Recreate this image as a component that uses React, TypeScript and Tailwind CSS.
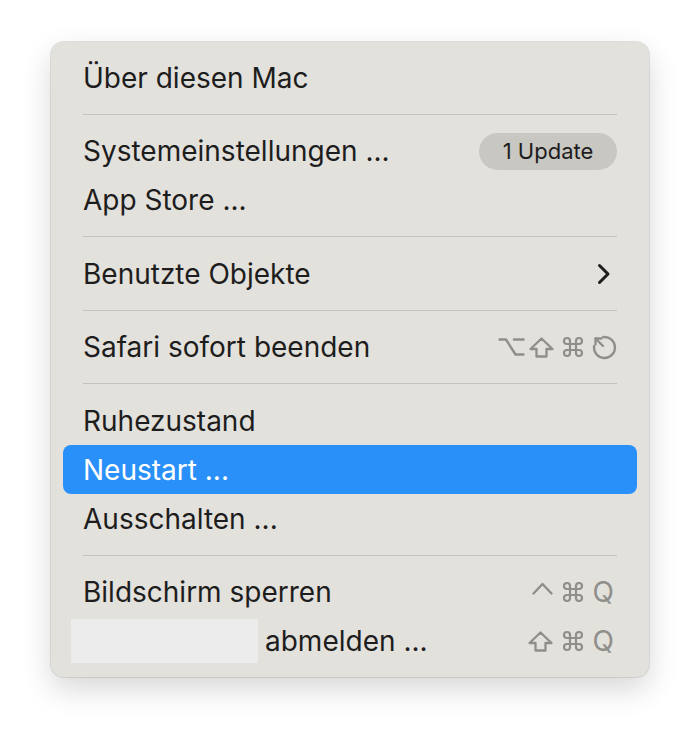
import { Command } from 'lucide-react';

const gray = '#8f8e8b';

const OptionKey = () => (
  <svg width="27" height="20" viewBox="0 0 27 20" fill="none" stroke={gray} strokeWidth="2.4" strokeLinecap="round" strokeLinejoin="round">
    <path d="M1.5 2.5 H8 L17.5 17.5 H25.5" />
    <path d="M16 2.5 H25.5" />
  </svg>
);

const ShiftKey = () => (
  <svg width="25" height="21" viewBox="0 0 25 21" fill="none" stroke={gray} strokeWidth="2.3" strokeLinejoin="round">
    <path d="M12.5 1.5 L23.5 12 H17.5 V19.5 H7.5 V12 H1.5 Z" />
  </svg>
);

const CmdKey = () => <Command size={24} color={gray} strokeWidth={2.2} />;

const EscKey = () => (
  <svg width="25" height="25" viewBox="0 0 25 25" fill="none" stroke={gray} strokeWidth="2.3" strokeLinecap="round" strokeLinejoin="round">
    <path d="M11 2.1 A10.5 10.5 0 1 1 2.1 11" />
    <path d="M11 11 L3.5 3.5" />
    <path d="M3.5 9.5 V3.5 H9.5" />
  </svg>
);

const CtrlKey = () => (
  <svg width="21" height="13" viewBox="0 0 21 13" fill="none" stroke={gray} strokeWidth="2.4" strokeLinecap="round" strokeLinejoin="round">
    <path d="M1.5 11.5 L10.5 2 L19.5 11.5" />
  </svg>
);

const Chevron = () => (
  <svg width="14" height="22" viewBox="0 0 14 22" fill="none" stroke="#1d1d1d" strokeWidth="3" strokeLinecap="round" strokeLinejoin="round">
    <path d="M2.5 2.5 L11 11 L2.5 19.5" />
  </svg>
);

const Q = () => <span className="text-[28px] leading-none text-[#8f8e8b]">Q</span>;

const Separator = () => (
  <div className="h-[24.5px] flex items-center px-[32px]">
    <div className="h-px w-full bg-[#c4c2bd]"></div>
  </div>
);

const Row = ({ label, right, active }: { label: React.ReactNode; right?: React.ReactNode; active?: boolean }) => (
  <div
    className={`h-[49px] mx-[12px] px-[20px] rounded-[8px] flex items-center justify-between ${
      active ? 'bg-[#2a90f9] text-white' : 'text-[#1d1d1d]'
    }`}
  >
    <span className="text-[28px] leading-none flex items-center">{label}</span>
    {right}
  </div>
);

export default function App() {
  return (
    <div
      className="min-h-screen bg-white flex justify-center pt-[42px]"
      style={{ fontFamily: 'Inter, "Noto Sans", sans-serif' }}
    >
      <div className="w-[598px] h-fit rounded-[13px] bg-[#e3e1dc] py-[11px] ring-1 ring-black/10 shadow-[0_12px_30px_rgba(0,0,0,0.16)]">
        <Row label="Über diesen Mac" />
        <Separator />
        <Row
          label="Systemeinstellungen ..."
          right={
            <span className="h-[37px] w-[138px] rounded-full bg-[#c9c7c2] flex items-center justify-center text-[22px] text-[#1d1d1d]">
              1 Update
            </span>
          }
        />
        <Row label="App Store ..." />
        <Separator />
        <Row label="Benutzte Objekte" right={<span className="mr-[6px] flex"><Chevron /></span>} />
        <Separator />
        <Row
          label="Safari sofort beenden"
          right={
            <div className="flex items-center gap-[4px]">
              <OptionKey />
              <ShiftKey />
              <span className="ml-[3px] flex"><CmdKey /></span>
              <span className="ml-[3px] flex"><EscKey /></span>
            </div>
          }
        />
        <Separator />
        <Row label="Ruhezustand" />
        <Row label="Neustart ..." active />
        <Row label="Ausschalten ..." />
        <Separator />
        <Row
          label="Bildschirm sperren"
          right={
            <div className="flex items-center gap-[8px] mr-[3px]">
              <span className="mb-[8px] flex"><CtrlKey /></span>
              <CmdKey />
              <Q />
            </div>
          }
        />
        <Row
          label={
            <>
              <span className="-ml-[12px] mr-[7px] w-[187px] h-[44px] bg-[#ececec]"></span>
              abmelden ...
            </>
          }
          right={
            <div className="flex items-center gap-[8px] mr-[3px]">
              <ShiftKey />
              <CmdKey />
              <Q />
            </div>
          }
        />
      </div>
    </div>
  );
}
